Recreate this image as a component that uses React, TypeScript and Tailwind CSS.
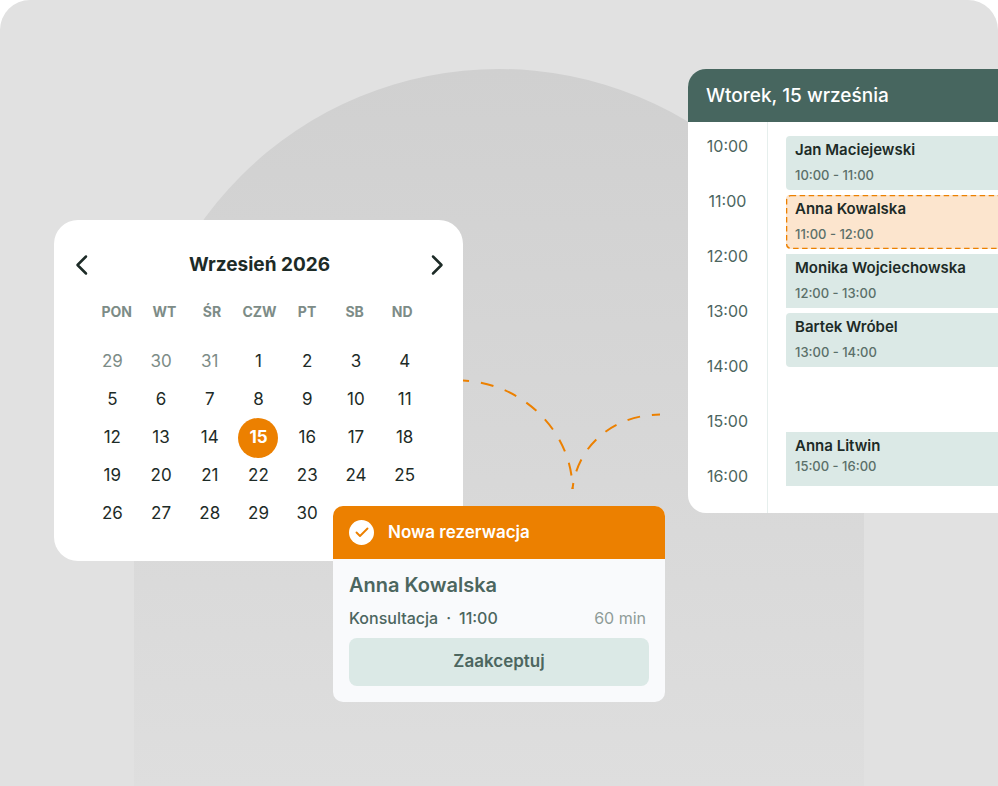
import { useState } from 'react';

const weekdays = ['PON', 'WT', 'ŚR', 'CZW', 'PT', 'SB', 'ND'];

const weeks = [
  [29, 30, 31, 1, 2, 3, 4],
  [5, 6, 7, 8, 9, 10, 11],
  [12, 13, 14, 15, 16, 17, 18],
  [19, 20, 21, 22, 23, 24, 25],
  [26, 27, 28, 29, 30],
];

const hours = ['10:00', '11:00', '12:00', '13:00', '14:00', '15:00', '16:00'];

const visits = [
  { name: 'Jan Maciejewski', time: '10:00 - 11:00', shape: 'rounded-l bg-[#dbe9e6]', pending: false },
  { name: 'Anna Kowalska', time: '11:00 - 12:00', shape: 'rounded-l bg-[#fce5ce]', pending: true },
  { name: 'Monika Wojciechowska', time: '12:00 - 13:00', shape: 'bg-[#dbe9e6]', pending: false },
  { name: 'Bartek Wróbel', time: '13:00 - 14:00', shape: 'rounded-l bg-[#dbe9e6]', pending: false },
];

const Calendar = () => {
  const [selected, setSelected] = useState(15);

  return (
    <section className="mt-[220px] ml-[54px] h-[341px] w-[409px] shrink-0 rounded-[24px] bg-white pt-[32px]">
      <div className="flex h-[26px] items-center justify-between pr-4 pl-[18px]">
        <button type="button" aria-label="Poprzedni miesiąc" className="flex w-5 justify-center">
          <svg width="20" height="24" viewBox="0 0 20 24" fill="none" stroke="#1d2b27" strokeWidth="2.5" strokeLinecap="round" strokeLinejoin="round">
            <path d="M14 3.5 5.5 12 14 20.5" />
          </svg>
        </button>
        <h2 className="text-[19px] font-bold text-[#1d2b27]">Wrzesień 2026</h2>
        <button type="button" aria-label="Następny miesiąc" className="flex w-5 justify-center">
          <svg width="20" height="24" viewBox="0 0 20 24" fill="none" stroke="#1d2b27" strokeWidth="2.5" strokeLinecap="round" strokeLinejoin="round">
            <path d="M6 3.5 14.5 12 6 20.5" />
          </svg>
        </button>
      </div>

      <table className="mt-[22px] block px-[34px]">
        <thead className="block pr-[3px] pl-[5px]">
          <tr className="grid h-[22px] grid-cols-7 items-center">
            {weekdays.map(day => (
              <th key={day} scope="col" className="text-center text-[14px] font-bold text-[#7d8c87]">
                {day}
              </th>
            ))}
          </tr>
        </thead>
        <tbody className="block pt-[21px] text-[#1d2b27]">
          {weeks.map((week, row) => (
            <tr key={row} className="grid h-[38px] grid-cols-7 items-center">
              {week.map(day => {
                const outside = row === 0 && day > 7;
                const active = !outside && day === selected;
                return (
                  <td key={day} className="flex justify-center">
                    <button
                      type="button"
                      onClick={() => setSelected(day)}
                      className={
                        active
                          ? '-my-1 size-10 rounded-full bg-[#ec8000] text-[17px] font-bold text-white'
                          : outside
                            ? 'text-[17px] text-[#7d8c87]'
                            : 'text-[17px]'
                      }
                    >
                      {day}
                    </button>
                  </td>
                );
              })}
            </tr>
          ))}
        </tbody>
      </table>
    </section>
  );
};

const Visit = ({ name, time }: { name: string; time: string }) => (
  <>
    <h3 className="text-[15px] leading-5 font-semibold whitespace-nowrap text-[#1d2b27]">{name}</h3>
    <p className="text-[13px] leading-5 font-medium text-[#5a6f69]">{time}</p>
  </>
);

const Schedule = () => (
  <section className="mt-[69px] ml-auto h-[444px] w-[310px] overflow-hidden rounded-l-[18px] bg-white">
    <h2 className="flex h-[53px] items-center bg-[#47665f] pt-px pl-[18px] text-[19px] font-medium text-white">
      Wtorek, 15 września
    </h2>
    <div className="flex h-[391px]">
      <ul className="w-[80px] border-r border-[#e6efed] pt-[14px] text-center text-[16px] text-[#4c665f]">
        {hours.map(hour => (
          <li key={hour} className="h-[55px] leading-5">{hour}</li>
        ))}
      </ul>
      <div className="flex flex-1 flex-col gap-[5px] pt-[14px] pl-[18px]">
        {visits.map(visit => (
          <article key={visit.name} className={`relative flex h-[54px] flex-col gap-[5px] pt-1 pl-[9px] ${visit.shape}`}>
            {visit.pending && (
              <svg className="absolute inset-0 h-full w-full" fill="none" stroke="#ec8000" strokeWidth="1.3" strokeDasharray="5.5 3.5">
                <rect x="0.65" y="0.65" width="240" height="52.7" rx="4" />
              </svg>
            )}
            <Visit name={visit.name} time={visit.time} />
          </article>
        ))}
        <article className="mt-[60px] h-[54px] bg-[#dbe9e6] pt-1 pl-[9px]">
          <Visit name="Anna Litwin" time="15:00 - 16:00" />
        </article>
      </div>
    </div>
  </section>
);

const Booking = () => (
  <section className="absolute top-[506px] left-1/2 w-[332px] -translate-x-1/2 overflow-hidden rounded-[10px] bg-[#f9fafc] text-[#4c665f]">
    <header className="flex h-[53px] items-center gap-[14px] bg-[#ec8000] pl-4 text-white">
      <svg width="25" height="25" viewBox="0 0 25 25" fill="none">
        <circle cx="12.5" cy="12.5" r="12.5" fill="#fff" />
        <path d="m7.5 12.5 3.5 3.5 7.5-7.5" stroke="#ec8000" strokeWidth="1.9" strokeLinecap="round" strokeLinejoin="round" />
      </svg>
      <h2 className="text-[17px] font-semibold">Nowa rezerwacja</h2>
    </header>
    <div className="px-4 pt-3 pb-4">
      <h3 className="text-[20px] leading-7 font-semibold">Anna Kowalska</h3>
      <div className="mt-[7px] flex items-center justify-between pr-[3px] text-[16px] leading-6">
        <p className="flex gap-2 font-medium">
          <span>Konsultacja</span>
          <span>·</span>
          <span>11:00</span>
        </p>
        <span className="text-[#8f9c98]">60 min</span>
      </div>
      <button type="button" className="mt-2 h-12 w-full rounded-lg bg-[#dbe9e6] text-[17px] font-semibold">
        Zaakceptuj
      </button>
    </div>
  </section>
);

const App = () => (
  <div className="bg-white font-['Inter',sans-serif]">
    <main className="relative flex min-h-screen items-start overflow-hidden rounded-t-[30px] bg-[#e1e1e1]">
      <div className="absolute top-[69px] bottom-0 left-1/2 w-[730px] -translate-x-1/2 rounded-t-[365px] bg-linear-to-b from-[#d0d0d0] to-[#dedede]" />
      <div className="relative flex flex-1 items-start">
        <Calendar />
        <Schedule />
        {/* dashed trail from the calendar to the booking and on to the schedule */}
        <svg className="absolute top-[370px] left-[463px]" width="205" height="125" viewBox="0 0 205 125" fill="none" stroke="#ec8000" strokeWidth="2" strokeDasharray="13 12">
          <path d="M0 10.5C60 13 109 62 109.5 119" strokeDashoffset="7" />
          <path d="M109.5 119C114 76 150 45 197 44.5" strokeDashoffset="7" />
        </svg>
        <Booking />
      </div>
    </main>
  </div>
);

export default App;
